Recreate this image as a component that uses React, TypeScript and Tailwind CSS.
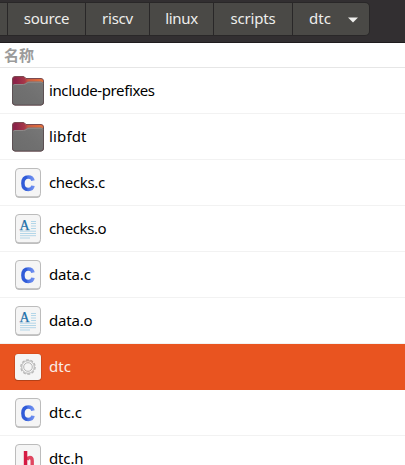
import React from 'react';

type Kind = 'folder' | 'c' | 'o' | 'exec' | 'h';

const crumbs = [
  { label: 'source', width: 'w-[78px]', spacing: 'tracking-[-0.25px]' },
  { label: 'riscv', width: 'w-16', spacing: 'tracking-[-0.25px]' },
  { label: 'linux', width: 'w-16', spacing: 'tracking-[-0.35px]' },
  { label: 'scripts', width: 'w-[79px]', spacing: 'tracking-[-0.15px]' },
];

const files: { name: string; kind: Kind; spacing: string }[] = [
  { name: 'include-prefixes', kind: 'folder', spacing: 'tracking-[-0.4px]' },
  { name: 'libfdt', kind: 'folder', spacing: 'tracking-[0.15px]' },
  { name: 'checks.c', kind: 'c', spacing: 'tracking-[-0.35px]' },
  { name: 'checks.o', kind: 'o', spacing: 'tracking-[-0.4px]' },
  { name: 'data.c', kind: 'c', spacing: 'tracking-[-0.15px]' },
  { name: 'data.o', kind: 'o', spacing: 'tracking-[-0.2px]' },
  { name: 'dtc', kind: 'exec', spacing: 'tracking-[0px]' },
  { name: 'dtc.c', kind: 'c', spacing: 'tracking-[0px]' },
  { name: 'dtc.h', kind: 'h', spacing: 'tracking-[-0.15px]' },
];

const FolderIcon: React.FC = () => (
  <svg width="32" height="30" viewBox="0 0 32 30">
    <defs>
      <linearGradient id="tab" x1="0" x2="1">
        <stop offset="0.1" stopColor="#8b2449" />
        <stop offset="0.4" stopColor="#a93848" />
        <stop offset="0.5" stopColor="#c85a42" />
        <stop offset="1" stopColor="#e8743a" />
      </linearGradient>
      <linearGradient id="front" x1="0" y1="1" x2="1" y2="0">
        <stop offset="0" stopColor="#6c6c6c" />
        <stop offset="0.5" stopColor="#707070" />
        <stop offset="1" stopColor="#787878" />
      </linearGradient>
    </defs>
    <path d="M0.5 26V3Q0.5 0.5 3 0.5H11Q12.5 0.5 13.5 2L14 2.5H29Q31.5 2.5 31.5 5V26Q31.5 29 29 29H3Q0.5 29 0.5 26Z" fill="url(#tab)" stroke="#7b4a50" />
    <path d="M0.5 10.5Q0.5 8 3 8H11Q13 8 14.5 6.5Q15.5 5.5 17 5.5H29Q31.5 5.5 31.5 8V26Q31.5 29 29 29H3Q0.5 29 0.5 26Z" fill="url(#front)" />
    <path d="M0.5 8V26Q0.5 29 3 29H29Q31.5 29 31.5 26V6" fill="none" stroke="#5c5154" />
    <path d="M1.5 9.2Q2 8.5 3 8.5H11.5Q13 8.5 15 7Q16 6.3 17 6.3H29Q30.3 6.3 30.8 7.5" fill="none" stroke="#8f8989" />
  </svg>
);

const Sheet: React.FC<{ kind: Kind }> = ({ kind }) => (
  <svg width="26" height="30" viewBox="0 0 26 30">
    <defs>
      <linearGradient id="blueC" x1="0" x2="1">
        <stop offset="0.35" stopColor="#305bd8" />
        <stop offset="0.5" stopColor="#4b74e5" />
        <stop offset="1" stopColor="#6d8def" />
      </linearGradient>
    </defs>
    <rect x="0.5" y="0.8" width="25" height="29" rx="3.5" fill="#aaa" />
    <rect x="0.5" y="0.5" width="25" height="28.3" rx="3.5" fill="#f5f5f5" stroke="#bcbcbc" />
    {kind === 'c' && (
      <path d="M18 12.6Q17.4 8.9 13.3 8.9C9.4 8.9 7.9 11.3 7.9 15.2S9.4 21.5 13.3 21.5Q17.4 21.5 18 17.8" fill="none" stroke="url(#blueC)" strokeWidth="3.5" />
    )}
    {kind === 'h' && (
      <>
        <path d="M12 15.8Q13.2 13.5 14.8 13.5Q17.2 13.5 17.2 16.8V26" fill="none" stroke="#e04660" strokeWidth="3.4" />
        <path d="M8.8 7H12.3V26H8.8Z" fill="#d51b43" />
      </>
    )}
    {kind === 'o' && (
      <>
        <text x="4.5" y="15.5" fontFamily="Liberation Serif, serif" fontSize="14" fill="#216fa9" stroke="#216fa9" strokeWidth="0.25">A</text>
        <path d="M16 7.5H21M16 9.5H21M16 12H21M16 14.5H21M5 17.2H21M5 19.5H21M5 21.7H21M5 24H15" stroke="#b3d6e8" />
      </>
    )}
  </svg>
);

const ExecIcon: React.FC = () => (
  <svg width="28" height="30" viewBox="0 0 28 30">
    <rect x="0.5" y="1.7" width="27" height="27.3" rx="3.5" fill="#b34118" />
    <rect x="1" y="2" width="26" height="26" rx="3" fill="#f5f5f5" />
    <g fill="none" stroke="#b5b5b5" transform="translate(14 15)">
      <circle r="7.2" strokeWidth="1.2" strokeDasharray="2.9 1.624" />
      <circle r="6.3" strokeWidth="1" />
      <circle r="4.3" strokeWidth="1" />
    </g>
  </svg>
);

const FileIcon: React.FC<{ kind: Kind }> = ({ kind }) => {
  if (kind === 'folder') return <FolderIcon />;
  if (kind === 'exec') return <ExecIcon />;
  return <Sheet kind={kind} />;
};

export default function App() {
  return (
    <div className="h-[465px] w-[405px] overflow-hidden bg-white font-['Noto_Sans','Noto_Sans_CJK_SC',sans-serif] text-[15px]">
      <header className="h-[43px] border-b border-[#1f1c1e] bg-[#322f31] pt-[2px]">
        <nav className="flex h-[34px] w-[370px] rounded-r-[5px] border border-l-0 border-[#292728] bg-[#4a4946] text-[#eeeeec]">
          <div className="w-2 border-r border-[#292728]" />
          {crumbs.map((crumb) => (
            <div key={crumb.label} className={`flex items-center justify-center border-r border-[#292728] pb-px ${crumb.width} ${crumb.spacing}`}>
              {crumb.label}
            </div>
          ))}
          <div className="flex flex-1 items-center pb-px pl-4">
            dtc
            <svg className="mt-[3px] ml-[17px]" width="10" height="6" viewBox="0 0 10 6">
              <path d="M0 0.5H10L5 5.5Z" fill="#eeeeec" />
            </svg>
          </div>
        </nav>
      </header>
      <div className="flex h-[25px] items-center border-b border-[#e6e6e6] pl-1 text-[15px] font-bold text-[#9b9b9b]">名称</div>
      <ul>
        {files.map((file) => (
          <li
            key={file.name}
            className={`flex h-[46px] items-center border-b pb-px ${file.kind === 'exec' ? 'border-[#e95420] bg-[#e95420] text-[#f9ece6]' : 'border-[#f2f2f2] text-black'}`}
          >
            <div className="ml-3 flex w-8 justify-center pt-px">
              <FileIcon kind={file.kind} />
            </div>
            <span className={`ml-[5px] whitespace-nowrap ${file.spacing}`}>{file.name}</span>
          </li>
        ))}
      </ul>
    </div>
  );
}
